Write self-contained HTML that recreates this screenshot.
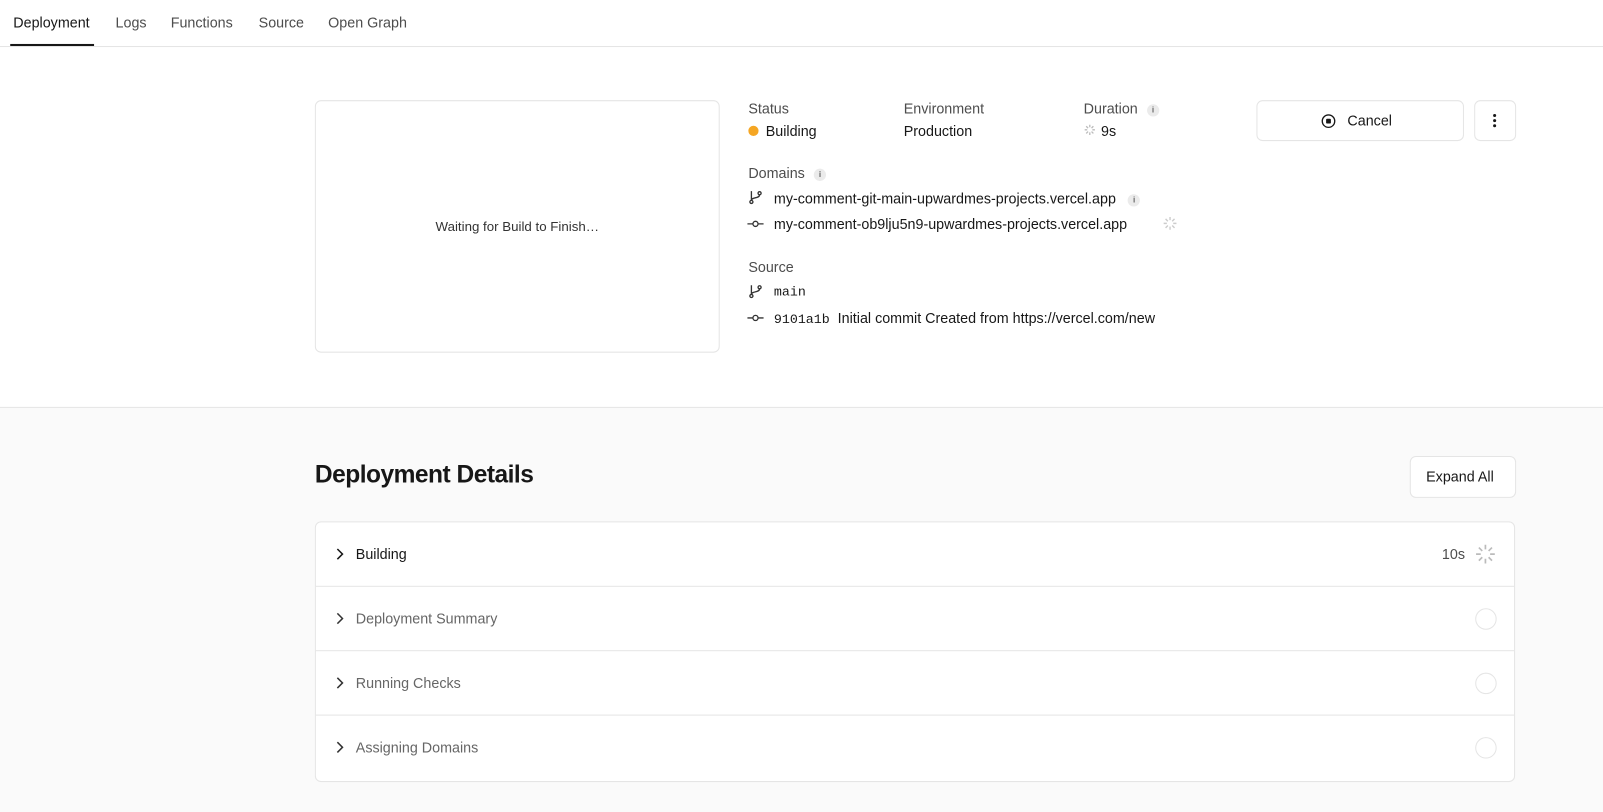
<!DOCTYPE html>
<html><head><meta charset="utf-8"><style>
*{box-sizing:border-box;margin:0;padding:0}
html,body{width:1603px;height:812px;overflow:hidden;background:#fafafa}
#w{width:1568px;height:794px;transform:scale(1.02232);transform-origin:0 0;font-family:"Liberation Sans",sans-serif;color:#171717;background:#fafafa;position:relative;font-size:14px}
.top{position:absolute;left:0;top:0;width:1568px;height:399px;background:#fff;border-bottom:1px solid #e5e5e5}
.tabs{position:absolute;left:0;top:0;width:1568px;height:46px;border-bottom:1px solid #e5e5e5}
.tab{position:absolute;top:14px;font-size:14px;color:#4d4d4d}
.a{position:absolute}
.lbl{color:#4d4d4d;font-size:14px}
.val{font-size:14px;color:#171717}
.mono{font-family:"Liberation Mono",monospace;font-size:13px}
.info{display:inline-block;width:12px;height:12px;border-radius:50%;background:#ebebeb;color:#666;font-size:8px;text-align:center;line-height:12px;font-weight:bold;vertical-align:1px}
.btn{position:absolute;background:#fff;border:1px solid #e5e5e5;border-radius:6px}
.card{position:absolute;left:308px;top:510px;width:1174px;height:255px;background:#fff;border:1px solid #e5e5e5;border-radius:6px}
.row{position:absolute;left:0;width:1172px;height:63px;border-bottom:1px solid #e5e5e5}
.row span.t{position:absolute;left:39px;top:23px;font-size:14px;color:#666}
.chev{position:absolute;left:19px;top:25px}
.circ{position:absolute;right:17px;top:21px;width:21px;height:21px;border:1.5px solid #e5e5e5;border-radius:50%}
</style></head><body><div id="w">
<div class="top"></div>
<div class="tabs">
<div class="tab" style="left:13px;color:#171717">Deployment</div>
<div class="a" style="left:10px;top:43px;width:82px;height:2px;background:#171717"></div>
<div class="tab" style="left:113px">Logs</div>
<div class="tab" style="left:167px">Functions</div>
<div class="tab" style="left:253px">Source</div>
<div class="tab" style="left:321px">Open Graph</div>
</div>
<div class="a" style="left:308px;top:98px;width:396px;height:247px;border:1px solid #e5e5e5;border-radius:6px;background:#fff"></div>
<div class="a" style="left:308px;top:214px;width:396px;text-align:center;font-size:13px;color:#333">Waiting for Build to Finish…</div>

<div class="a lbl" style="left:732px;top:98px">Status</div>
<div class="a" style="left:732px;top:123px;width:10px;height:10px;border-radius:50%;background:#f5a623"></div>
<div class="a val" style="left:749px;top:120px">Building</div>
<div class="a lbl" style="left:884px;top:98px">Environment</div>
<div class="a val" style="left:884px;top:120px">Production</div>
<div class="a lbl" style="left:1060px;top:98px">Duration <span class="info" style="margin-left:5px">i</span></div>
<svg class="a" style="left:1060px;top:121px" width="12" height="12" viewBox="0 0 12 12" stroke="#bbb" stroke-width="1.3"><path d="M6 1v2.5M6 8.5V11M1 6h2.5M8.5 6H11M2.5 2.5l1.8 1.8M7.7 7.7l1.8 1.8M2.5 9.5l1.8-1.8M7.7 4.3l1.8-1.8"/></svg>
<div class="a val" style="left:1077px;top:120px">9s</div>

<div class="a lbl" style="left:732px;top:161px">Domains <span class="info" style="margin-left:5px">i</span></div>
<svg class="a" style="left:732px;top:186px" width="14" height="14" viewBox="0 0 14 14" fill="none" stroke="#333" stroke-width="1.3"><circle cx="3" cy="11.5" r="1.5"/><circle cx="11" cy="3" r="1.5"/><path d="M3 1v9M11 4.5c0 4-8 2-8 5.5"/></svg>
<div class="a val" style="left:757px;top:186px">my-comment-git-main-upwardmes-projects.vercel.app <span class="info" style="margin-left:8px">i</span></div>
<svg class="a" style="left:731px;top:212px" width="16" height="14" viewBox="0 0 16 14" fill="none" stroke="#333" stroke-width="1.3"><circle cx="8" cy="7" r="2.5"/><path d="M0 7h5.5M10.5 7H16"/></svg>
<div class="a val" style="left:757px;top:211px">my-comment-ob9lju5n9-upwardmes-projects.vercel.app</div>
<svg class="a" style="left:1137px;top:211px" width="15" height="15" viewBox="0 0 12 12" stroke="#ccc" stroke-width="1.1"><path d="M6 1v2.5M6 8.5V11M1 6h2.5M8.5 6H11M2.5 2.5l1.8 1.8M7.7 7.7l1.8 1.8M2.5 9.5l1.8-1.8M7.7 4.3l1.8-1.8"/></svg>

<div class="a lbl" style="left:732px;top:253px">Source</div>
<svg class="a" style="left:732px;top:278px" width="14" height="14" viewBox="0 0 14 14" fill="none" stroke="#333" stroke-width="1.3"><circle cx="3" cy="11.5" r="1.5"/><circle cx="11" cy="3" r="1.5"/><path d="M3 1v9M11 4.5c0 4-8 2-8 5.5"/></svg>
<div class="a val mono" style="left:757px;top:278px">main</div>
<svg class="a" style="left:731px;top:304px" width="16" height="14" viewBox="0 0 16 14" fill="none" stroke="#333" stroke-width="1.3"><circle cx="8" cy="7" r="2.5"/><path d="M0 7h5.5M10.5 7H16"/></svg>
<div class="a val" style="left:757px;top:303px"><span class="mono">9101a1b</span>&nbsp; Initial commit Created from https://vercel.com/new</div>

<div class="btn" style="left:1229px;top:98px;width:203px;height:40px"></div>
<svg class="a" style="left:1292px;top:111px" width="15" height="15" viewBox="0 0 16 16"><circle cx="8" cy="8" r="6.5" fill="none" stroke="#171717" stroke-width="1.4"/><rect x="5.5" y="5.5" width="5" height="5" rx="1" fill="#171717"/></svg>
<div class="a val" style="left:1318px;top:110px">Cancel</div>
<div class="btn" style="left:1442px;top:98px;width:41px;height:40px"></div>
<svg class="a" style="left:1459px;top:110px" width="6" height="16"><circle cx="3" cy="3" r="1.5" fill="#171717"/><circle cx="3" cy="8" r="1.5" fill="#171717"/><circle cx="3" cy="13" r="1.5" fill="#171717"/></svg>

<div class="a" style="left:308px;top:451px;font-size:24px;font-weight:bold;letter-spacing:-0.5px">Deployment Details</div>
<div class="btn" style="left:1379px;top:446px;width:104px;height:41px"></div>
<div class="a val" style="left:1395px;top:458px">Expand All</div>

<div class="card">
<div class="row" style="top:0"><svg class="chev" width="8" height="12" viewBox="0 0 8 12" fill="none" stroke="#171717" stroke-width="1.5"><path d="M2 1l5 5-5 5"/></svg><span class="t" style="color:#171717">Building</span>
<span class="a" style="right:48px;top:23px;color:#4d4d4d">10s</span>
<svg class="a" style="right:17px;top:20px" width="22" height="22" viewBox="0 0 12 12" stroke="#bbb" stroke-width="0.9"><path d="M6 1v2.5M6 8.5V11M1 6h2.5M8.5 6H11M2.5 2.5l1.8 1.8M7.7 7.7l1.8 1.8M2.5 9.5l1.8-1.8M7.7 4.3l1.8-1.8"/></svg></div>
<div class="row" style="top:63px"><svg class="chev" width="8" height="12" viewBox="0 0 8 12" fill="none" stroke="#333" stroke-width="1.5"><path d="M2 1l5 5-5 5"/></svg><span class="t">Deployment Summary</span><div class="circ"></div></div>
<div class="row" style="top:126px"><svg class="chev" width="8" height="12" viewBox="0 0 8 12" fill="none" stroke="#333" stroke-width="1.5"><path d="M2 1l5 5-5 5"/></svg><span class="t">Running Checks</span><div class="circ"></div></div>
<div class="row" style="top:189px;border-bottom:none"><svg class="chev" width="8" height="12" viewBox="0 0 8 12" fill="none" stroke="#333" stroke-width="1.5"><path d="M2 1l5 5-5 5"/></svg><span class="t">Assigning Domains</span><div class="circ"></div></div>
</div>
</div></body></html>
